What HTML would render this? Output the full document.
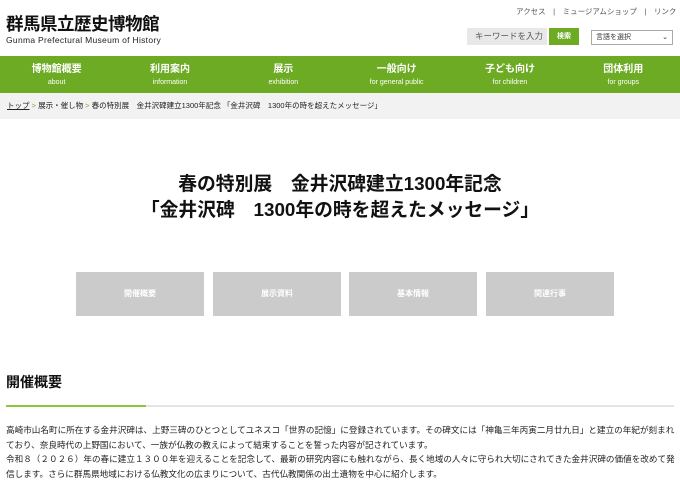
<!DOCTYPE html>
<html><head><meta charset="utf-8"><style>
*{margin:0;padding:0;box-sizing:border-box}
body{width:680px;height:480px;overflow:hidden;background:#fff;font-family:"Liberation Sans","Noto Sans CJK JP",sans-serif;color:#222;position:relative}
.a{position:absolute}
.nav{top:56px;left:0;width:680px;height:37px;background:#6dab24;display:flex}
.nav div{flex:1;text-align:center;color:#fff;font-weight:bold;font-size:10px;padding-top:7px;line-height:14px}
.nav div small{display:block;font-size:7px;font-weight:normal;line-height:11px}
.btn{top:272px;width:128px;height:44px;background:#cbcbcb;color:#fff;font-size:8px;font-weight:bold;text-align:center;line-height:44px}
p{font-size:8.6px;line-height:14.5px;color:#222}
</style></head><body>
<div class="a" style="left:6px;top:11px;font-size:17.5px;font-weight:bold;letter-spacing:-0.5px;color:#111">群馬県立歴史博物館</div>
<div class="a" style="left:6px;top:35px;font-size:8.5px;letter-spacing:0.3px">Gunma Prefectural Museum of History</div>
<div class="a" style="left:516px;top:6px;font-size:7.5px;color:#555">アクセス　|　ミュージアムショップ　|　リンク</div>
<div class="a" style="left:467px;top:28px;width:80px;height:17px;background:#e8e8e8;font-size:8.5px;color:#555;line-height:17px;padding-left:8px">キーワードを入力</div>
<div class="a" style="left:549px;top:28px;width:30px;height:17px;background:#6dab24;font-size:7px;color:#fff;line-height:17px;text-align:center;font-weight:bold">検索</div>
<div class="a" style="left:591px;top:30px;width:82px;height:15px;border:1px solid #aaa;font-size:7px;line-height:13px;padding-left:4px;color:#333">言語を選択<span style="position:absolute;right:4px">⌄</span></div>
<div class="a nav"><div>博物館概要<small>about</small></div><div>利用案内<small>information</small></div><div>展示<small>exhibition</small></div><div>一般向け<small>for general public</small></div><div>子ども向け<small>for children</small></div><div>団体利用<small>for groups</small></div></div>
<div class="a" style="top:93px;left:0;width:680px;height:26px;background:#f2f2f2;font-size:7.5px;line-height:26px;padding-left:7px;color:#222"><u>トップ</u> <span style="color:#6dab24">&gt;</span> 展示・催し物 <span style="color:#6dab24">&gt;</span> 春の特別展　金井沢碑建立1300年記念 「金井沢碑　1300年の時を超えたメッセージ」</div>
<div class="a" style="top:171px;left:0;width:680px;text-align:center;font-size:18.8px;font-weight:bold;line-height:26px;color:#111">春の特別展　金井沢碑建立1300年記念<br>「金井沢碑　1300年の時を超えたメッセージ」</div>
<div class="a btn" style="left:76px">開催概要</div>
<div class="a btn" style="left:213px">展示資料</div>
<div class="a btn" style="left:349px">基本情報</div>
<div class="a btn" style="left:486px">関連行事</div>
<div class="a" style="left:6px;top:372px;font-size:14px;font-weight:bold;color:#111">開催概要</div>
<div class="a" style="left:6px;top:405px;width:668px;height:2px;background:#e5e5e5"></div>
<div class="a" style="left:6px;top:405px;width:140px;height:2px;background:#8cc63f"></div>
<div class="a" style="left:6px;top:423px;width:670px"><p>高崎市山名町に所在する金井沢碑は、上野三碑のひとつとしてユネスコ「世界の記憶」に登録されています。その碑文には「神亀三年丙寅二月廿九日」と建立の年紀が刻まれており、奈良時代の上野国において、一族が仏教の教えによって結束することを誓った内容が記されています。<br>令和８（２０２６）年の春に建立１３００年を迎えることを記念して、最新の研究内容にも触れながら、長く地域の人々に守られ大切にされてきた金井沢碑の価値を改めて発信します。さらに群馬県地域における仏教文化の広まりについて、古代仏教関係の出土遺物を中心に紹介します。</p></div>
</body></html>
